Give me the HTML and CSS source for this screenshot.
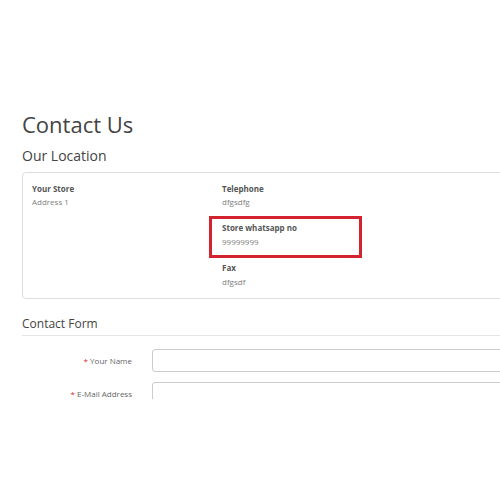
FILE: index.html
```html
<!DOCTYPE html>
<html>
<head>
<meta charset="utf-8">
<link rel="stylesheet" href="styles.css">
</head>
<body>
<div class="shot">
  <h1 class="title">Contact Us</h1>
  <h2 class="subtitle">Our Location</h2>
  <div class="card">
    <div class="col">
      <div class="group">
        <div class="label">Your Store</div>
        <div class="value">Address 1</div>
      </div>
    </div>
    <div class="col">
      <div class="group">
        <div class="label">Telephone</div>
        <div class="value">dfgsdfg</div>
      </div>
      <div class="group highlight">
        <div class="label">Store whatsapp no</div>
        <div class="value">99999999</div>
      </div>
      <div class="group">
        <div class="label">Fax</div>
        <div class="value">dfgsdf</div>
      </div>
    </div>
  </div>
  <div class="legend">Contact Form</div>
  <div class="form">
    <div class="row">
      <label class="flabel"><span class="req">*</span> Your Name</label>
      <div class="input"></div>
    </div>
    <div class="row">
      <label class="flabel"><span class="req">*</span> E-Mail Address</label>
      <div class="input"></div>
    </div>
  </div>
</div>
</body>
</html>
```

FILE: styles.css
```css
html, body {
  margin: 0;
  padding: 0;
  background: #fff;
}
body {
  font-family: "Open Sans", "Liberation Sans", sans-serif;
  color: #666;
}
.shot {
  width: 500px;
  height: 399px;
  overflow: hidden;
  box-sizing: border-box;
  padding: 111px 0 0 22px;
}
.title {
  margin: 0;
  font-size: 22px;
  line-height: 26px;
  font-weight: 400;
  color: #444;
}
.subtitle {
  margin: 10px 0 0;
  font-size: 14px;
  line-height: 18px;
  font-weight: 400;
  color: #444;
}
.card {
  margin-top: 7px;
  width: 640px;
  border: 1px solid #ddd;
  border-radius: 4px;
  padding: 8.5px 0 10.5px 9px;
  display: grid;
  grid-template-columns: 190px 190px;
  font-size: 8px;
  line-height: 13.3px;
}
.group + .group {
  margin-top: 13.3px;
}
.label {
  font-weight: 700;
  color: #555;
}
.value {
  color: #808080;
}
.highlight {
  position: relative;
}
.highlight::before {
  content: "";
  position: absolute;
  left: -13px;
  top: -5px;
  width: 153px;
  height: 42px;
  box-sizing: border-box;
  border: 3px solid #d2232f;
}
.legend {
  margin-top: 17px;
  width: 700px;
  font-size: 12px;
  line-height: 16px;
  color: #444;
  padding-bottom: 3px;
  border-bottom: 1px solid #e5e5e5;
}
.form {
  margin-top: 13px;
  display: flex;
  flex-direction: column;
  gap: 10px;
}
.row {
  display: grid;
  grid-template-columns: 110px 560px;
  column-gap: 20px;
  align-items: center;
}
.flabel {
  text-align: right;
  font-size: 8px;
  color: #666;
}
.req {
  color: #e0242f;
}
.input {
  height: 22.5px;
  box-sizing: border-box;
  border: 1px solid #ccc;
  border-radius: 3px;
}
```
